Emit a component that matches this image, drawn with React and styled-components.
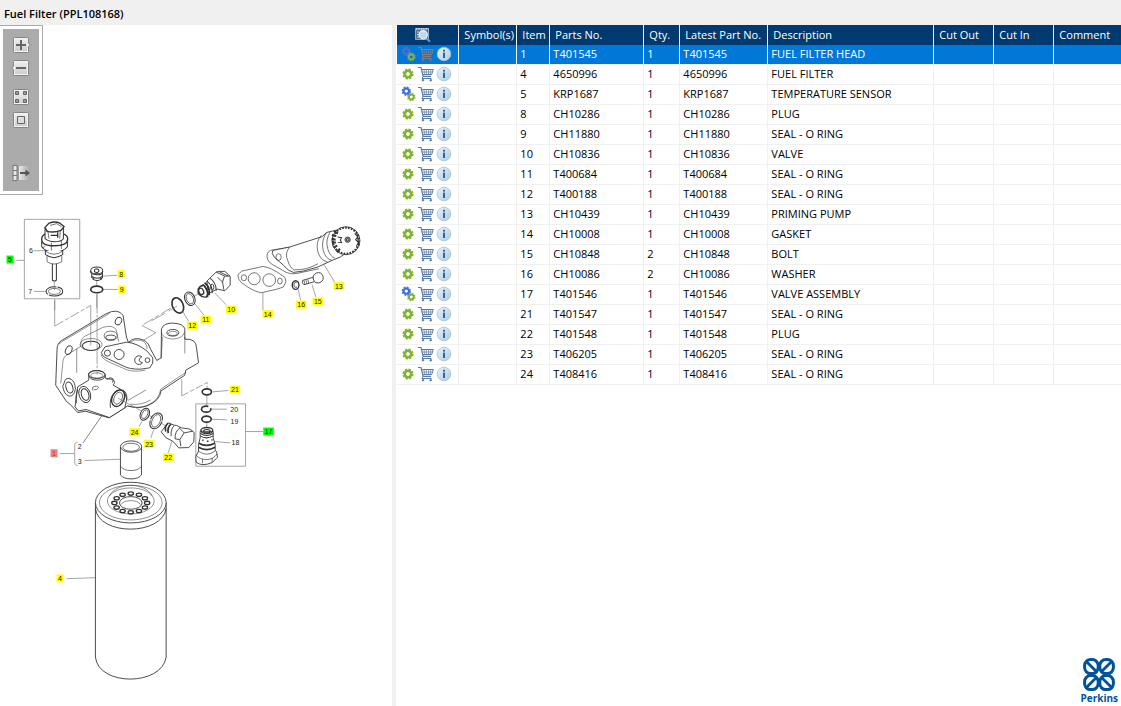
import React, { useState } from "react";
import styled, { createGlobalStyle } from "styled-components";

const GlobalStyle = createGlobalStyle`
  * {
    box-sizing: border-box;
  }

  body {
    margin: 0;
    background: #fff;
    color: #000;
    font-family: "Open Sans", "Noto Sans", sans-serif;
    font-size: 11px;
  }
`;

const Page = styled.div`
  display: flex;
  flex-direction: column;
  min-height: 100vh;
`;

const TitleBar = styled.header`
  height: 25px;
  padding: 4px 4px 0;
  background: #f0f0f0;
`;

const Title = styled.h1`
  margin: 0;
  font-size: 11px;
  line-height: 20px;
  font-weight: 600;
`;

const Panes = styled.main`
  flex: 1;
  display: flex;
`;

const DrawingPane = styled.section`
  flex: 0 0 35%;
  min-width: 0;
`;

const Splitter = styled.div`
  flex: 0 0 4px;
  background: #f0f0f0;
`;

const PartsPane = styled.section`
  flex: 1;
  min-width: 0;
  display: flex;
  flex-direction: column;
  padding-left: 1px;
`;

const ToolbarFrame = styled.div`
  width: 43px;
  padding: 3px;
  border: 1px solid #a9a9a9;
  border-left: 0;
`;

const Toolbar = styled.div`
  display: flex;
  flex-direction: column;
  align-items: center;
  height: 162px;
  padding-top: 8px;
  background: #ababab;
`;

const ToolButton = styled.button`
  display: block;
  width: 20px;
  height: 16px;
  padding: 0;
  margin-bottom: ${props => props.$gap || 0}px;
  border: 0;
  background: none;
  cursor: pointer;

  svg {
    display: block;
  }
`;

const Drawing = styled.svg`
  display: block;
  width: 100%;
  height: auto;
`;

const Table = styled.table`
  width: 100%;
  table-layout: fixed;
  border-collapse: separate;
  border-spacing: 0;
`;

const HeadCell = styled.th`
  height: 20px;
  padding: 0 0 0 5px;
  border-right: 1px solid #f0f0f0;
  background: #003a70;
  color: #fff;
  font-weight: 400;
  line-height: 20px;
  text-align: left;
  white-space: nowrap;

  &:last-child {
    border-right: 0;
  }
`;

const Row = styled.tr`
  background: ${props => (props.$selected ? "#0078d7" : "#fff")};
  color: ${props => (props.$selected ? "#fff" : "#000")};
  cursor: default;
`;

const Cell = styled.td`
  height: 20px;
  padding: 0 0 1px 3px;
  border-right: 1px solid #f0f0f0;
  border-bottom: 1px solid #f0f0f0;
  line-height: 18px;
  white-space: nowrap;

  &:last-child {
    border-right: 0;
  }
`;

const Actions = styled.div`
  display: flex;
  align-items: center;
  height: 18px;
  gap: 2px;

  svg {
    display: block;
  }
`;

const IconButton = styled.button`
  width: 16px;
  height: 16px;
  padding: 0;
  border: 0;
  background: none;
  cursor: pointer;
`;

const SearchButton = styled(IconButton)`
  display: block;
  margin: 0 0 0 13px;
`;

const Brand = styled.a`
  align-self: flex-end;
  margin-top: auto;
  padding: 0 3px 1px 0;
  color: #00539b;
  font-size: 10px;
  line-height: 13px;
  font-weight: 700;
  text-align: center;
  text-decoration: none;

  svg {
    display: block;
    margin: 0 auto;
  }
`;

const columns = [
  { label: "Symbol(s)", width: 58 },
  { label: "Item", width: 33 },
  { label: "Parts No.", width: 94 },
  { label: "Qty.", width: 36 },
  { label: "Latest Part No.", width: 88 },
  { label: "Description", width: 166 },
  { label: "Cut Out", width: 60 },
  { label: "Cut In", width: 60 },
  { label: "Comment" }
];

const parts = [
  { item: 1, no: "T401545", qty: 1, name: "FUEL FILTER HEAD", kit: true },
  { item: 4, no: "4650996", qty: 1, name: "FUEL FILTER" },
  { item: 5, no: "KRP1687", qty: 1, name: "TEMPERATURE SENSOR", kit: true },
  { item: 8, no: "CH10286", qty: 1, name: "PLUG" },
  { item: 9, no: "CH11880", qty: 1, name: "SEAL - O RING" },
  { item: 10, no: "CH10836", qty: 1, name: "VALVE" },
  { item: 11, no: "T400684", qty: 1, name: "SEAL - O RING" },
  { item: 12, no: "T400188", qty: 1, name: "SEAL - O RING" },
  { item: 13, no: "CH10439", qty: 1, name: "PRIMING PUMP" },
  { item: 14, no: "CH10008", qty: 1, name: "GASKET" },
  { item: 15, no: "CH10848", qty: 2, name: "BOLT" },
  { item: 16, no: "CH10086", qty: 2, name: "WASHER" },
  { item: 17, no: "T401546", qty: 1, name: "VALVE ASSEMBLY", kit: true },
  { item: 21, no: "T401547", qty: 1, name: "SEAL - O RING" },
  { item: 22, no: "T401548", qty: 1, name: "PLUG" },
  { item: 23, no: "T406205", qty: 1, name: "SEAL - O RING" },
  { item: 24, no: "T408416", qty: 1, name: "SEAL - O RING" }
];

const YELLOW = "#ffff00";
const GREEN = "#00ff00";
const RED = "#f08080";

const callouts = [
  { n: 5, x: 10, y: 259.5, fill: GREEN },
  { n: 8, x: 121, y: 274, fill: YELLOW },
  { n: 9, x: 121.7, y: 289.5, fill: YELLOW },
  { n: 10, x: 231, y: 309.5, fill: YELLOW },
  { n: 11, x: 205.7, y: 319.5, fill: YELLOW },
  { n: 12, x: 192, y: 325.5, fill: YELLOW },
  { n: 13, x: 338.5, y: 286, fill: YELLOW },
  { n: 14, x: 267.5, y: 314, fill: YELLOW },
  { n: 15, x: 317.5, y: 301.5, fill: YELLOW },
  { n: 16, x: 301, y: 304.5, fill: YELLOW },
  { n: 21, x: 234.7, y: 389.5, fill: YELLOW },
  { n: 17, x: 268.3, y: 431.3, fill: GREEN },
  { n: 24, x: 134.5, y: 432, fill: YELLOW },
  { n: 23, x: 149, y: 443.7, fill: YELLOW },
  { n: 22, x: 168, y: 457, fill: YELLOW },
  { n: 4, x: 60, y: 578, fill: YELLOW },
  { n: 1, x: 54, y: 453, fill: RED, color: "#a04040" },
  { n: 6, x: 31, y: 250.5 },
  { n: 7, x: 30.3, y: 291 },
  { n: 20, x: 234, y: 409.5 },
  { n: 19, x: 234.3, y: 421 },
  { n: 18, x: 235.3, y: 442.5 },
  { n: 2, x: 79.7, y: 446 },
  { n: 3, x: 79.7, y: 461 }
];

const ToolFace = ({ children, tab }) => (
  <svg width="20" height="16" viewBox="0 0 20 16">
    <defs>
      <linearGradient id="face" x1="0" y1="0" x2="0" y2="1">
        <stop offset="0" stopColor="#f2f2f2" />
        <stop offset="1" stopColor="#cacaca" />
      </linearGradient>
    </defs>
    <rect x="2.5" y="0.5" width="15" height="15" rx="1" fill="url(#face)" stroke="#858585" />
    <rect x="3.5" y="1.5" width="13" height="13" fill="none" stroke="#f2f2f2" />
    {tab === "right" && <path d="M17 5.5l2.3 2.5-2.3 2.5" fill="#e6e6e6" stroke="#858585" />}
    {tab === "left" && <path d="M3 5.5L.7 8 3 10.5" fill="#e6e6e6" stroke="#858585" />}
    {children}
  </svg>
);

const Gear = ({ x, y, size, color }) => (
  <g transform={`translate(${x} ${y}) scale(${size})`} fill="none" stroke={color}>
    <circle r="3.2" strokeWidth="2.6" />
    <circle r="4.8" strokeWidth="1.6" strokeDasharray="2.2 1.57" />
  </g>
);

const GearIcon = ({ kit, dim }) => (
  <svg width="16" height="16" viewBox="0 0 16 16">
    {kit ? (
      <>
        <Gear x={6.3} y={5.2} size={0.84} color={dim ? "#4c6fc9" : "#3b6fd8"} />
        <Gear x={11.3} y={10.9} size={0.76} color={dim ? "#8fae3c" : "#7fb332"} />
      </>
    ) : (
      <Gear x={8} y={8} size={1} color="#7fb332" />
    )}
  </svg>
);

const CartIcon = ({ dim }) => (
  <svg
    width="16"
    height="16"
    viewBox="0 0 16 16"
    fill="none"
    stroke={dim ? "#7d7f8e" : "#5a7ba6"}
  >
    <path d="M0 1.5h3l2.2 8.8h7.8" strokeWidth="1.2" />
    <path d="M3.6 3.5h11.7l-1.6 5H4.8" strokeWidth="1" />
    <path d="M6 3.5l.5 5M8.3 3.5v5M10.6 3.5l-.2 5M12.9 3.5l-.7 5M4.2 6h10.2" strokeWidth=".7" />
    <path d="M5.2 10.3L4 12.5h9.5" strokeWidth="1" />
    <circle cx="5" cy="14.2" r=".8" fill="#3b597f" />
    <circle cx="12.7" cy="14.2" r=".8" fill="#3b597f" />
  </svg>
);

const InfoIcon = () => (
  <svg width="16" height="16" viewBox="0 0 16 16">
    <defs>
      <linearGradient id="info" x1="0" y1="0" x2="1" y2="1">
        <stop offset="0" stopColor="#eaf3fa" />
        <stop offset="1" stopColor="#a9cbe6" />
      </linearGradient>
    </defs>
    <circle cx="8" cy="8" r="6.8" fill="url(#info)" stroke="#a3c0da" strokeWidth=".8" />
    <rect x="7" y="6.6" width="2" height="5.4" fill="#3a648f" />
    <rect x="7" y="3.8" width="2" height="1.8" fill="#3a648f" />
  </svg>
);

const FindIcon = () => (
  <svg width="16" height="16" viewBox="0 0 16 16">
    <path d="M.5 1.5h13v11H.5z" fill="#56718f" stroke="#a9bdd0" strokeWidth=".8" />
    <path d="M1 2h12.5" stroke="#d8e6f1" strokeWidth="1.3" strokeDasharray="1 .7" />
    <path d="M2 5h2M2 7.5h2M2 10h2" stroke="#d3e0eb" strokeWidth="1" />
    <path d="M11 11l4 3.8" stroke="#5b9bd0" strokeWidth="2" />
    <circle cx="8.2" cy="7.7" r="4.1" fill="#b9dcf2" stroke="#ecf5fb" strokeWidth="1.2" />
  </svg>
);

const PerkinsMark = () => (
  <svg width="34" height="35" viewBox="0 0 34 35" fill="none" stroke="#00539b">
    {[[9.4, 9.6, 1], [24.6, 9.6, -1], [9.4, 25.6, -1], [24.6, 25.6, 1]].map(([x, y, s]) => (
      <g key={`${x}-${y}`} transform={`translate(${x} ${y}) scale(${s} 1)`}>
        <rect x="-6.8" y="-7" width="13.6" height="14" rx="6" strokeWidth="3" />
        <path d="M-5 -5L6 6" strokeWidth="2.8" />
      </g>
    ))}
  </svg>
);

const Callout = ({ n, x, y, fill, color = "#222" }) => {
  const w = n > 9 ? 10.5 : 7;
  return (
    <g>
      {fill && <rect x={x - w / 2} y={y - 4} width={w} height="8" fill={fill} />}
      <text x={x} y={y + 2.6} textAnchor="middle" fontSize="7" fill={color} stroke="none">
        {n}
      </text>
    </g>
  );
};

// temperature sensor, plug and seal: items 5 to 9
const SensorArt = () => (
  <g transform="translate(0 210) scale(.33333)">
    <path d="M73 28h166v238H73z" stroke="#777" strokeWidth="2" />
    <path d="M49 151h24M101 122h34M101 244h36M164 267v33M290 213v20M290 253v40M308 198l43-2M309 238h44" stroke="#777" strokeWidth="2" />
    <g fill="#fff" strokeWidth="3">
      <path d="M157 158v52q6 6 12 0v-52" />
      <path d="M141 136v19q21 14 44 0v-19" strokeWidth="2" />
      <path d="M136 118v15q26 20 52 0v-15" />
      <path d="M125 95v15q12 16 38 16t39-16V95" />
      <path d="M125 87q0-11 13-16h50q15 5 15 16 0 20-40 20t-38-20z" strokeWidth="4" />
      <path d="M135 52v34q10 9 29 9t26-9V50" />
      <path d="M135 52l12-13q18-6 32 0l13 11-8 10q-20 9-43 4z" strokeWidth="4" />
      <path d="M150 46l20-5 14 9M143 61l4 25M181 62l-2 24M136 123q26 19 52 0M135 109l-9 5M154 98v24M184 93v24" strokeWidth="2" />
      <path d="M173 67v16M152 76h22" strokeWidth="4" />
      <ellipse cx="163" cy="244" rx="25" ry="14" strokeDasharray="48 3" />
      <ellipse cx="163" cy="244" rx="18" ry="9" strokeWidth="2" />
      <path d="M163 216v24" stroke="#777" strokeWidth="2" />
      <path d="M275 189v14q15 13 32 0v-14M271 183q0 10 19 11t18-11" strokeWidth="3" />
      <ellipse cx="290" cy="181" rx="18" ry="10" strokeWidth="3" />
      <path d="M284 178l6-2 6 3v6l-6 3-7-3z" />
      <path d="M276 199q15 11 30 0M278 207q12 8 27 0" />
      <ellipse cx="290" cy="238" rx="18" ry="10" strokeWidth="5" />
    </g>
  </g>
);

// cast filter head
const HeadArt = () => (
  <g transform="translate(40 300) scale(.33333)">
    <g strokeWidth="2.6">
      <path d="M47 255l4-108q0-17 14-26l133-80q35-18 51 5l10 65 6 16q17-18 43-8 18 8 20 22l22 40 13-8 1-87q7-18 36-17 30 2 34 17v31q35-2 35 26l6 45-38 22-3 15-71 47q-4 30-42 45-28 10-58 0l-56 36-71-20-23 4-23-25-11-8z" fill="#fff" />
      <path d="M57 132q7-8 25-17l126-75M62 250l6-60q0-20 15-27l40-25q-3-20 10-29l55-27q29-9 40 6l8 37M110 146v72M363 95q2 19 34 22 32-2 36-21M434 160v-50M363 175l4-65" strokeWidth="1.6" />
      <ellipse cx="398" cy="98" rx="18" ry="10" />
      <ellipse cx="398" cy="100" rx="13" ry="6" strokeWidth="1.6" />
      <ellipse cx="86" cy="150" rx="9" ry="14" transform="rotate(24 86 150)" />
      <ellipse cx="235" cy="63" rx="9" ry="12" transform="rotate(24 235 63)" />
      <ellipse cx="153" cy="133" rx="33" ry="18" strokeWidth="1.6" />
      <ellipse cx="153" cy="137" rx="26" ry="14" strokeWidth="3" />
      <path d="M192 107q2-14 19-14 19 0 21 14-2 14-20 14-18 0-20-14z" strokeWidth="2" />
      <ellipse cx="212" cy="112" rx="15" ry="7" />
      <path d="M184 157l11-17 65-14q31 3 61 27l17 20q4 16-9 30l-27 4q-35 1-53-10l-56-26q-8-6-9-14z" fill="#fff" />
      <circle cx="202" cy="159" r="9" />
      <circle cx="237" cy="163" r="15" />
      <path d="M305 170a13 13 0 1 0 2 18q-9-2-10-8 1-7 8-10" />
      <circle cx="322" cy="180" r="7" />
      <path d="M267 128q16-12 33-8 21 5 21 27M183 164q4 16 39 28l36 16q22 9 58 2" strokeWidth="1.6" />
      <path d="M72 249q4-19 18-13 15 5 16 31-4 22-19 21-16-6-19-30z" fill="#fff" />
      <ellipse cx="88" cy="262" rx="10" ry="17" transform="rotate(-18 88 262)" strokeWidth="3" />
      <path d="M113 260l33-20v-20q10-10 25-9 19 2 24 12l2 12 21 3q10 8 1 17l34 19 7 23-6 26-46 29-70-24-23 4-10-12z" fill="#fff" />
      <ellipse cx="170" cy="223" rx="25" ry="12" />
      <ellipse cx="170" cy="226" rx="18" ry="8" strokeWidth="1.6" />
      <path d="M147 228q5 12 25 12t23-13M200 238q13-10 20 0l-3 9M112 268q-7 22-3 41" />
      <ellipse cx="134" cy="283" rx="17" ry="25" transform="rotate(-18 134 283)" />
      <ellipse cx="135" cy="283" rx="11" ry="18" transform="rotate(-18 135 283)" strokeWidth="3" />
      <path d="M158 271v-10q12-6 18 1-5 8-14 7" strokeWidth="2" />
      <path d="M211 323q-4-30 12-45 16-13 29-6 10 8 8 28" />
      <ellipse cx="234" cy="294" rx="18" ry="26" transform="rotate(24 234 294)" strokeWidth="4" />
      <ellipse cx="234" cy="294" rx="12" ry="19" transform="rotate(24 234 294)" strokeWidth="2" />
      <path d="M263 318q40 10 67-7 26-12 32-44l76-51M263 301l55-32M270 312q35 4 62-13" strokeWidth="1.6" />
    </g>
    <g stroke="#777" strokeWidth="2">
      <path d="M44 0v78" />
      <path d="M44 78l108-62" strokeDasharray="30 6 12 6" />
      <path d="M152 16v120" />
      <path d="M171-20v243" strokeDasharray="60 4 8 4" />
      <path d="M392 24l-87 52" strokeDasharray="34 8 12 8" />
      <path d="M305 76l42 22-38 23M425 237v50" />
      <path d="M425 287l76-40v18" strokeDasharray="22 6 14 6" />
      <path d="M187 344l-58 84" stroke="#444" />
      <path d="M234 294l70 38M326 345l10 6M365 370l13 8" />
    </g>
  </g>
);

// pump, gasket, bolt and valve: items 10 to 16
const PumpArt = () => (
  <g transform="translate(140 215) scale(.33333)" strokeWidth="2.6">
    <path d="M447 97l-56 9q-15 7-9 27 2 8 14 15l42 24q14 7 32 3l66-14" fill="#fff" strokeWidth="2" />
    <path d="M398 106l50-10 97-31 15-13 38-9 35 59-33 24-20 8-48 22-43 12-30 4q-14-3-30-22l-27-24q-10-12-4-20z" fill="#fff" />
    <path d="M448 96q-16 20-5 42 6 20 20 28M463 164q35 2 70-18" strokeWidth="2" />
    <ellipse cx="415" cy="126" rx="8" ry="10" strokeWidth="2" />
    <path d="M543 61q-18 20-10 50 8 26 28 29M558 53q-16 25-9 54 8 26 25 28M570 50q-15 25-8 50 7 25 22 29" strokeWidth="2" />
    <circle cx="617" cy="77" r="42" fill="#fff" />
    <circle cx="617" cy="77" r="39" strokeWidth="6" strokeDasharray="5 4" />
    <path d="M575 60l13 3M574 72l12 2M575 84l12-2M580 97l11-5M581 48l12 8M590 111l9-10" strokeWidth="6" />
    <circle cx="622" cy="74" r="8" fill="#aaa" />
    <circle cx="622" cy="74" r="4" />
    <path d="M592 66l12 2-4 7 4 8-11-1M643 55l9 10-6 9 8 8-6 12M650 57l6 35" strokeWidth="3" />
    <path d="M293 179l12-11 64-14q19 2 43 18l22 15 3 13-8 16-22 7-44 10q-18-3-42-18l-18-13q-9-7-10-23z" fill="#fff" strokeWidth="2" />
    <ellipse cx="311" cy="188" rx="8" ry="9" strokeWidth="2" />
    <circle cx="342" cy="191" r="18" strokeWidth="2" />
    <circle cx="387" cy="195" r="19" strokeWidth="2" />
    <ellipse cx="419" cy="198" rx="7" ry="9" strokeWidth="2" />
    <ellipse cx="466" cy="210" rx="10" ry="13" fill="#fff" strokeWidth="4" />
    <path d="M469 203q-8-3-8 7 1 9 9 6" />
    <path d="M487 196l30-9 8 12-34 10q-8-5-4-13z" fill="#fff" />
    <path d="M491 196l3 12M497 195l3 11M503 193l2 11" strokeWidth="2" />
    <path d="M519 183q8-14 22-9 10 7 7 20-7 12-21 9-10-7-8-20z" fill="#fff" />
    <path d="M200 198l28-27 10-2 16 0 16 15v26l-16 17-23-5-27 14z" fill="#fff" />
    <path d="M228 171l25 12 16 0M253 183l-6 18 4 23M247 201l-15-15M237 170l27 13" />
    <path d="M174 222q8-14 18-10l12 21-5 13q-15 2-25-11z" fill="#fff" strokeWidth="4" />
    <path d="M187 208q18 11 15 38M193 203q18 13 14 37" strokeWidth="5" />
    <path d="M200 198q18 13 16 36M210 190q18 12 18 37" strokeWidth="3" />
    <ellipse cx="183" cy="229" rx="7" ry="10" transform="rotate(-24 183 229)" strokeWidth="4" />
    <ellipse cx="216" cy="216" rx="5" ry="9" />
    <ellipse cx="149" cy="251" rx="15" ry="21" transform="rotate(-24 149 251)" strokeWidth="3" fill="#fff" />
    <ellipse cx="149" cy="251" rx="10" ry="16" transform="rotate(-24 149 251)" strokeWidth="2" />
    <ellipse cx="113" cy="271" rx="16" ry="24" transform="rotate(-24 113 271)" strokeWidth="5" fill="#fff" />
    <path d="M111 273l-26 15M74 295l-40 22M155 247l18-10" stroke="#777" strokeWidth="2" />
    <path d="M223 233l35 36M165 267l27 34M128 290l17 28M368 232v53M550 146l33 55M515 208l12 38M474 223l7 32" stroke="#777" strokeWidth="2" />
  </g>
);

// nipple, plug and valve assembly: items 2, 3 and 17 to 24
const ValveArt = () => (
  <g transform="translate(40 370) scale(.33333)" strokeWidth="2.6">
    <path d="M467 101h149v187H467z" stroke="#777" strokeWidth="2" />
    <path d="M60 250h43M113 216q-9-1-9 10v48q0 12 9 12M134 271l106-4M616 184h53M518 65l46-4M515 117h45M515 147l46 2M524 214l46 4M332 203l8-23M395 214l-11 34M297 169l8-15M500 76v33M500 156v16" stroke="#777" strokeWidth="2" />
    <path d="M241 230v84q10 12 32 12t31-12v-84" fill="#fff" />
    <ellipse cx="273" cy="229" rx="32" ry="17" fill="#fff" />
    <ellipse cx="273" cy="231" rx="25" ry="12" strokeWidth="2" />
    <path d="M241 288q10 13 32 13t31-13" strokeWidth="2" />
    <ellipse cx="314" cy="132" rx="13" ry="19" transform="rotate(25 314 132)" strokeWidth="3" />
    <ellipse cx="314" cy="132" rx="8" ry="14" transform="rotate(25 314 132)" strokeWidth="2" />
    <ellipse cx="348" cy="152" rx="17" ry="25" transform="rotate(25 348 152)" strokeWidth="3" strokeDasharray="60 3" />
    <ellipse cx="348" cy="152" rx="12" ry="20" transform="rotate(25 348 152)" strokeWidth="2" />
    <path d="M376 168l9-10 17 7q8 0 14 4l8 4 22 3q12 4 16 12l-1 27-15 17-30 1-18-20-20-10-15-18z" fill="#fff" />
    <path d="M384 159q-12 10-7 25M393 162q-12 9-9 27" strokeWidth="5" />
    <path d="M402 166q-11 12-9 32M420 172q-17 13-15 34" />
    <path d="M458 183l-26 5-14-14M432 188l-13 20 3 20M419 208l-14-2" />
    <ellipse cx="500" cy="65" rx="14" ry="9" strokeWidth="5" />
    <ellipse cx="498" cy="117" rx="14" ry="9" strokeWidth="5" strokeDasharray="60 8" />
    <ellipse cx="499" cy="147" rx="14" ry="9" strokeWidth="5" />
    <path d="M480 183v20l-5 20v20l-8 16 1 17q17 14 48 1l16-16-3-17-4-3v-18l-6-20v-19z" fill="#fff" />
    <ellipse cx="500" cy="181" rx="18" ry="9" strokeWidth="4" />
    <ellipse cx="500" cy="183" rx="10" ry="5" strokeWidth="3" />
    <path d="M481 190q18 12 38 0M480 197q18 12 39 0" strokeWidth="3" />
    <path d="M476 219q22 13 48 0M475 231q24 14 50 0" strokeWidth="5" />
    <path d="M467 254q10 14 34 14 19-1 30-17M487 266v13M516 263v13M474 242q25 20 51 0" strokeWidth="2" />
    <path d="M486 210h4M500 213h5M514 209h3" strokeWidth="5" />
  </g>
);

// spin-on filter: item 4
const FilterArt = () => {
  const holes = Array.from({ length: 12 }, (_, i) => (i * Math.PI) / 6);
  return (
    <g transform="translate(80 475) scale(.33333)" strokeWidth="2.6">
      <path d="M-40 310l86-3" stroke="#777" strokeWidth="2" />
      <path d="M46 82v463c9 88 199 88 212 0V82" fill="#fff" />
      <path d="M46 100c10 82 199 82 212 0" />
      <ellipse cx="152" cy="82" rx="106" ry="61" fill="#fff" />
      <ellipse cx="152" cy="82" rx="94" ry="52" strokeWidth="1.6" />
      <ellipse cx="152" cy="77" rx="70" ry="39" strokeWidth="1.6" />
      <path d="M88 62c20-42 108-42 128 0" strokeWidth="1.6" />
      <ellipse cx="152" cy="83" rx="34" ry="19" />
      <path d="M123 88c8-16 50-16 58 0" strokeWidth="1.6" />
      {holes.map(a => (
        <ellipse
          key={a}
          cx={152 + 49 * Math.cos(a)}
          cy={83 + 28 * Math.sin(a)}
          rx="8"
          ry="5"
          strokeWidth="4"
        />
      ))}
    </g>
  );
};

const App = () => {
  const [selected, setSelected] = useState(1);

  return (
    <>
      <GlobalStyle />
      <Page>
        <TitleBar>
          <Title>Fuel Filter (PPL108168)</Title>
        </TitleBar>
        <Panes>
          <DrawingPane>
            <ToolbarFrame>
              <Toolbar>
                <ToolButton $gap={7} aria-label="Zoom in">
                  <ToolFace tab="right">
                    <path d="M5 8h10M10 3v10" stroke="#666" strokeWidth="2" />
                  </ToolFace>
                </ToolButton>
                <ToolButton $gap={13} aria-label="Zoom out">
                  <ToolFace tab="left">
                    <path d="M5 8h10" stroke="#666" strokeWidth="2" />
                  </ToolFace>
                </ToolButton>
                <ToolButton $gap={7} aria-label="Fit to window">
                  <ToolFace>
                    <path
                      d="M4.5 2.5h3v3h-3zM12.5 2.5h3v3h-3zM4.5 10.5h3v3h-3zM12.5 10.5h3v3h-3z"
                      fill="#999"
                      stroke="#666"
                    />
                  </ToolFace>
                </ToolButton>
                <ToolButton $gap={37} aria-label="Actual size">
                  <ToolFace>
                    <path d="M6.5 4.5h7v7h-7z" fill="#ddd" stroke="#666" />
                  </ToolFace>
                </ToolButton>
                <ToolButton aria-label="Hide list">
                  <svg width="20" height="16" viewBox="0 0 20 16">
                    <defs>
                      <linearGradient id="fade">
                        <stop offset="0" stopColor="#eee" />
                        <stop offset="1" stopColor="#ababab" />
                      </linearGradient>
                    </defs>
                    <path d="M7 1h11v14H7z" fill="url(#fade)" />
                    <path d="M2 .5h4v15H2zM2 5.5h4M2 10.5h4" fill="#e6e6e6" stroke="#777" />
                    <path d="M7.5.5v15" stroke="#999" />
                    <path d="M9 8h7" stroke="#555" strokeWidth="2" />
                    <path d="M14.5 4.5L19 8l-4.5 3.5z" fill="#555" />
                  </svg>
                </ToolButton>
              </Toolbar>
            </ToolbarFrame>
            <Drawing
              viewBox="0 195 392 500"
              fill="none"
              stroke="#333"
              fontFamily="Liberation Sans, Arial, sans-serif"
              role="img"
              aria-label="Exploded view of the fuel filter"
            >
              <HeadArt />
              <SensorArt />
              <PumpArt />
              <FilterArt />
              <ValveArt />
              <g stroke="none">
                {callouts.map(callout => (
                  <Callout key={callout.n} {...callout} />
                ))}
              </g>
            </Drawing>
          </DrawingPane>
          <Splitter />
          <PartsPane>
            <Table>
              <colgroup>
                <col style={{ width: 62 }} />
                {columns.map(({ label, width }) => (
                  <col key={label} style={{ width }} />
                ))}
              </colgroup>
              <thead>
                <tr>
                  <HeadCell>
                    <SearchButton aria-label="Search parts">
                      <FindIcon />
                    </SearchButton>
                  </HeadCell>
                  {columns.map(({ label }) => (
                    <HeadCell key={label}>{label}</HeadCell>
                  ))}
                </tr>
              </thead>
              <tbody>
                {parts.map(({ item, no, qty, name, kit }) => (
                  <Row
                    key={item}
                    $selected={item === selected}
                    onClick={() => setSelected(item)}
                  >
                    <Cell>
                      <Actions>
                        <GearIcon kit={kit} dim={item === selected} />
                        <IconButton aria-label={"Add " + no + " to cart"}>
                          <CartIcon dim={item === selected} />
                        </IconButton>
                        <IconButton aria-label={"About " + no}>
                          <InfoIcon />
                        </IconButton>
                      </Actions>
                    </Cell>
                    <Cell />
                    <Cell>{item}</Cell>
                    <Cell>{no}</Cell>
                    <Cell>{qty}</Cell>
                    <Cell>{no}</Cell>
                    <Cell>{name}</Cell>
                    <Cell />
                    <Cell />
                    <Cell />
                  </Row>
                ))}
              </tbody>
            </Table>
            <Brand href="#perkins">
              <PerkinsMark />
              Perkins
            </Brand>
          </PartsPane>
        </Panes>
      </Page>
    </>
  );
};

export default App;
